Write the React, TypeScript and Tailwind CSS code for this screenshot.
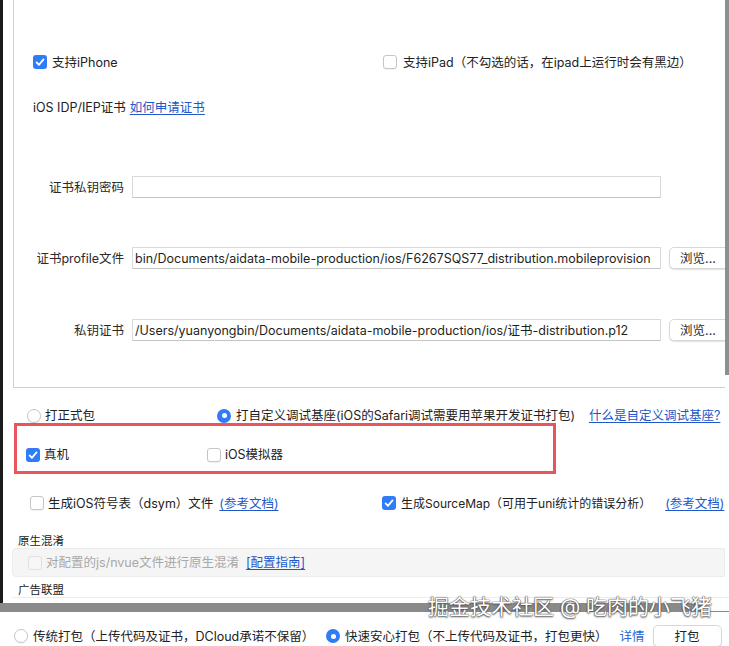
import React from "react"

// Панель настроек iOS-пакета (HBuilderX «原生App-云打包»)

const FONT = "font-['Inter','Noto_Sans_CJK_SC',sans-serif]"

interface BoxProps {
  checked?: boolean
  disabled?: boolean
}

const CheckBox: React.FC<BoxProps> = ({ checked, disabled }) => {
  if (checked) {
    return (
      <span className="flex h-[14px] w-[14px] shrink-0 items-center justify-center rounded-[3px] bg-[#2f7cf6]">
        <svg viewBox="0 0 14 14" className="h-[14px] w-[14px]">
          <path
            d="M3.6 7.4l2.3 2.4 4.6-5.4"
            fill="none"
            stroke="#fff"
            strokeWidth="1.8"
            strokeLinecap="round"
            strokeLinejoin="round"
          />
        </svg>
      </span>
    )
  }
  return (
    <span
      className={
        disabled
          ? "h-[14px] w-[14px] shrink-0 rounded-[3px] border border-[#e0e0e0] bg-[#f7f7f7]"
          : "h-[14px] w-[14px] shrink-0 rounded-[3px] border border-[#c6c6c6] bg-white shadow-[0_1px_1px_rgba(0,0,0,0.06)]"
      }
    />
  )
}

const Radio: React.FC<BoxProps> = ({ checked }) =>
  checked ? (
    <span className="flex h-[14px] w-[14px] shrink-0 items-center justify-center rounded-full bg-[#2f7cf6]">
      <span className="h-[5px] w-[5px] rounded-full bg-white" />
    </span>
  ) : (
    <span className="h-[14px] w-[14px] shrink-0 rounded-full border border-[#c6c6c6] bg-white shadow-[0_1px_1px_rgba(0,0,0,0.06)]" />
  )

const Link: React.FC<{ children: React.ReactNode; className?: string }> = ({ children, className = "" }) => (
  <span className={`whitespace-nowrap text-[#2257c9] underline underline-offset-2 ${className}`}>{children}</span>
)

const FileRow: React.FC<{ label: string; value: string; browse?: boolean; className?: string }> = ({
  label,
  value,
  browse,
  className = "",
}) => (
  <div className={`flex h-[22px] items-center ${className}`}>
    <span className="w-[110px] shrink-0 text-right text-[#2a2a2a]">{label}</span>
    <div className="ml-[8px] flex h-[22px] w-[529px] shrink-0 items-center overflow-hidden whitespace-nowrap border border-[#dadada] border-b-[#c4c4c4] bg-white pl-[2px] text-[#1f1f1f]">
      {value}
    </div>
    {browse && (
      <button className="ml-[8px] flex h-[22px] w-[64px] shrink-0 items-center justify-center rounded-[5px] border border-[#d8d8d8] bg-white pr-[6px] text-[#2a2a2a] shadow-[0_1px_1px_rgba(0,0,0,0.12)]">
        浏览...
      </button>
    )}
  </div>
)

export default function App() {
  return (
    <div className={`relative h-[646px] w-[729px] overflow-hidden bg-white text-[12.5px] leading-[15px] whitespace-nowrap ${FONT}`}>
      <div className="flex h-[603px]">
        <div className="w-[3px] shrink-0 bg-[#1c1c1c]" />
        <div className="relative min-w-0 flex-1">
          {/* 证书面板 */}
          <div className="ml-[10px] w-[712px] overflow-hidden border-b border-l border-[#cfcfcf] pb-[46px]">
            <div className="mt-[51px] flex h-[22px] items-center pl-[19px]">
              <label className="flex w-[350px] items-center gap-[5px] text-[#222]">
                <CheckBox checked />
                支持iPhone
              </label>
              <label className="flex items-center gap-[6px] text-[#222]">
                <CheckBox />
                支持iPad（不勾选的话，在ipad上运行时会有黑边）
              </label>
            </div>
            <div className="mt-[23px] flex h-[22px] items-center pl-[19px] text-[#222]">
              iOS IDP/IEP证书
              <Link className="ml-[4px]">如何申请证书</Link>
            </div>
            <FileRow className="mt-[58px]" label="证书私钥密码" value="" />
            <FileRow
              className="mt-[49px]"
              label="证书profile文件"
              value="bin/Documents/aidata-mobile-production/ios/F6267SQS77_distribution.mobileprovision"
              browse
            />
            <FileRow
              className="mt-[50px]"
              label="私钥证书"
              value="/Users/yuanyongbin/Documents/aidata-mobile-production/ios/证书-distribution.p12"
              browse
            />
          </div>
          {/* 滚动条 */}
          <div className="absolute top-0 right-0 h-[375px] w-[4px] bg-[#8f8f8f]" />

          {/* 基座类型 */}
          <div className="mt-[20px] flex h-[15px] items-center pl-[24px] text-[#222]">
            <label className="flex w-[190px] items-center gap-[4px]">
              <Radio />
              打正式包
            </label>
            <label className="flex w-[372px] items-center gap-[5px]">
              <Radio checked />
              打自定义调试基座(iOS的Safari调试需要用苹果开发证书打包)
            </label>
            <Link>什么是自定义调试基座?</Link>
          </div>

          <div className="ml-[11px] h-[51px] w-[542px] border-[3px] border-[#e8555a] pt-[21px] pl-[9px]">
            <div className="flex items-center text-[#222]">
              <label className="flex w-[181px] items-center gap-[4px]">
                <CheckBox checked />
                真机
              </label>
              <label className="flex items-center gap-[4px]">
                <CheckBox />
                iOS模拟器
              </label>
            </div>
          </div>

          <div className="mt-[22px] flex h-[14px] items-center pl-[27px] text-[#222]">
            <label className="flex w-[352px] shrink-0 items-center">
              <CheckBox />
              <span className="ml-[4px]">生成iOS符号表（dsym）文件</span>
              <Link className="ml-[6px]">(参考文档)</Link>
            </label>
            <label className="flex shrink-0 items-center">
              <CheckBox checked />
              <span className="ml-[5px] text-[12px]">生成SourceMap（可用于uni统计的错误分析）</span>
              <Link className="ml-[14px]">(参考文档)</Link>
            </label>
          </div>

          <div className="mt-[24px] pl-[15px] text-[11.5px] leading-[14px] text-[#222]">原生混淆</div>
          <div className="ml-[9px] flex h-[29px] w-[713px] items-center rounded-l-[4px] border border-[#ececec] bg-[#f5f5f5] pl-[15px]">
            <CheckBox disabled />
            <span className="ml-[4px] text-[#a8a8a8]">对配置的js/nvue文件进行原生混淆</span>
            <Link className="ml-[7px]">[配置指南]</Link>
          </div>
          <div className="mt-[6px] pl-[15px] text-[11.5px] leading-[14px] text-[#222]">广告联盟</div>
          <div className="ml-[9px] h-[6px] border-t border-[#ececec]" />
        </div>
      </div>

      {/* 分隔条 */}
      <div className="flex h-[9px]">
        <div className="h-[9px] w-[702px] bg-[#8a8a8a]" />
        <div className="h-[1px] flex-1 self-end bg-[#8a8a8a]" />
      </div>

      {/* 底部打包方式 */}
      <div className="flex h-[34px] items-center pt-[14px] pl-[14px] text-[#222]">
        <label className="flex w-[312px] items-center gap-[5px]">
          <Radio />
          传统打包（上传代码及证书，DCloud承诺不保留）
        </label>
        <label className="flex items-center gap-[5px]">
          <Radio checked />
          快速安心打包（不上传代码及证书，打包更快）
        </label>
        <span className="ml-[12px] text-[#2a66d6]">详情</span>
        <button className="ml-[8px] flex h-[22px] w-[69px] items-center justify-center rounded-[5px] border border-[#d8d8d8] bg-white text-[#222] shadow-[0_1px_1px_rgba(0,0,0,0.1)]">
          打包
        </button>
      </div>

      <div className="pointer-events-none absolute top-[592px] left-[428px] text-[21px] leading-[30px] whitespace-nowrap text-white [text-shadow:0_0_1px_#444,0_0_1px_#444,0_1px_2px_#555]">
        掘金技术社区 @ 吃肉的小飞猪
      </div>
    </div>
  )
}
